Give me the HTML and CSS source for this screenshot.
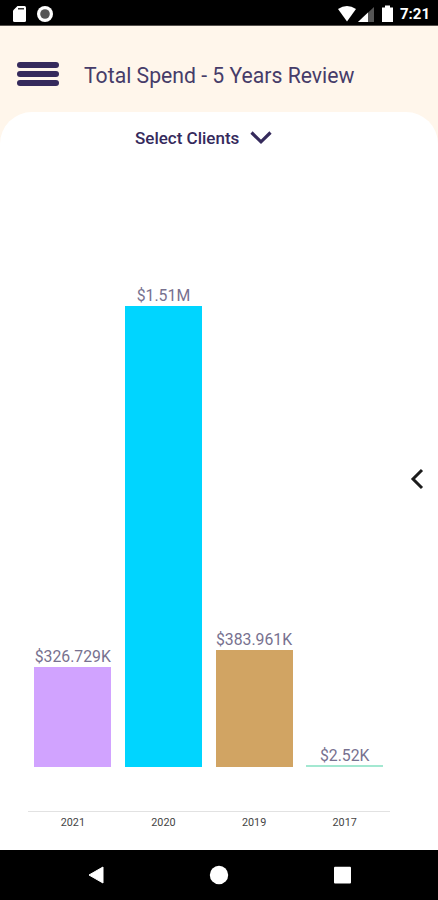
FILE: index.html
```
<!DOCTYPE html>
<html lang="en">
<head>
    <meta charset="utf-8">
    <title>Total Spend - 5 Years Review</title>
    <link rel="stylesheet" href="styles.css">
</head>
<body>
<div class="status-bar">
    <svg class="status-left" width="44" height="18" viewBox="0 0 44 18">
        <path d="M4.5 1H11.5Q13 1 13 2.5V15.5Q13 17 11.5 17H1.5Q0 17 0 15.5V5.5Z" fill="#fff"/>
        <path d="M5 3h6v1.500H5z" fill="#333"/>
        <circle cx="32" cy="9" r="8" fill="#fff"/>
        <circle cx="32" cy="9" r="4.800" fill="#555"/>
    </svg>
    <svg class="status-right" width="56" height="18" viewBox="0 0 56 18">
        <path d="M0 4Q9 -2 18 4L9 16.500Z" fill="#fff"/>
        <path d="M20 17L36 2V17Z" fill="#555"/>
        <path d="M20 17L30 7.500V17Z" fill="#fff"/>
        <path d="M47 0.500h5v2h3v14.500H44V2.500h3z" fill="#fff"/>
    </svg>
    <span class="clock">7:21</span>
</div>

<header class="header">
    <div class="menu">
        <span></span>
        <span></span>
        <span></span>
    </div>
    <h1>Total Spend - 5 Years Review</h1>
</header>

<main class="sheet">
    <div class="select">
        <span>Select Clients</span>
        <svg width="22" height="14" viewBox="0 0 22 14">
            <path d="M1.5 1.5L11 10.8L20.5 1.5" fill="none" stroke="#352a5c" stroke-width="3.200"/>
        </svg>
    </div>
    <div class="chart">
        <div class="column">
            <span class="value">$326.729K</span>
            <div class="bar purple" style="height: 100px"></div>
        </div>
        <div class="column">
            <span class="value">$1.51M</span>
            <div class="bar blue" style="height: 461px"></div>
        </div>
        <div class="column">
            <span class="value">$383.961K</span>
            <div class="bar brown" style="height: 117px"></div>
        </div>
        <div class="column">
            <span class="value low">$2.52K</span>
            <div class="bar green" style="height: 2px"></div>
        </div>
    </div>
    <div class="years">
        <span>2021</span>
        <span>2020</span>
        <span>2019</span>
        <span>2017</span>
    </div>
    <svg class="drawer-arrow" width="14" height="22" viewBox="0 0 14 22">
        <path d="M12 2L3 11L12 20" fill="none" stroke="#1c1c1c" stroke-width="3"/>
    </svg>
</main>

<nav class="nav-bar">
    <svg width="18" height="20" viewBox="0 0 18 20">
        <path d="M16 2L2 10L16 18Z" fill="#fff" stroke="#fff" stroke-linejoin="round"/>
    </svg>
    <svg width="20" height="20" viewBox="0 0 20 20">
        <circle cx="10" cy="10" r="9.200" fill="#fff"/>
    </svg>
    <svg width="18" height="20" viewBox="0 0 18 20">
        <rect x="1" y="1.800" width="17" height="16.700" rx="1" fill="#fff"/>
    </svg>
</nav>
</body>
</html>
```
FILE: styles.css
```
* {
    box-sizing: border-box;
}
body {
    margin: 0;
    height: 900px;
    display: flex;
    flex-direction: column;
    font-family: Roboto, 'Liberation Sans', sans-serif;
    background-color: #fff6eb;
    color: #352a5c;
    overflow: hidden;
}

/* Status bar */
.status-bar {
    height: 26px;
    flex: none;
    display: flex;
    align-items: center;
    padding: 2px 9px 0 13px;
    background-color: #000;
    border-bottom: 1px solid #55514d;
}
.status-right {
    margin-left: auto;
}
.clock {
    margin-left: 6px;
    width: 29px;
    font-size: 15px;
    font-weight: 700;
    color: #fff;
}

/* Header */
.header {
    height: 86px;
    flex: none;
    display: flex;
    align-items: center;
    padding: 10px 17px 0;
}
.menu {
    display: flex;
    flex-direction: column;
    gap: 3.500px;
    width: 42px;
    margin-right: 25px;
}
.menu span {
    height: 5.500px;
    border-radius: 3px;
    background-color: #352a5c;
}
h1 {
    margin: 2px 0 0;
    font-size: 21.200px;
    font-weight: 400;
    white-space: nowrap;
    color: #463c69;
}

/* Content */
.sheet {
    height: 738px;
    flex: none;
    position: relative;
    display: flex;
    flex-direction: column;
    background-color: #fff;
    border-radius: 32px 32px 0 0;
}
.select {
    display: flex;
    align-items: center;
    gap: 11px;
    height: 52px;
    padding-left: 135px;
    font-size: 17px;
    font-weight: 500;
}
.chart {
    height: 648px;
    width: 362.500px;
    margin-left: 27.500px;
    padding-bottom: 44px;
    display: grid;
    grid-template-columns: repeat(4, 1fr);
    align-items: end;
    border-bottom: 1px solid #e2e2e2;
}
.column {
    display: flex;
    flex-direction: column;
    align-items: center;
}
.value {
    font-size: 15.800px;
    line-height: 20px;
    color: #77718f;
}
.low {
    line-height: 18px;
}
.bar {
    width: 77px;
}
.purple {
    background-color: #d1a3ff;
}
.blue {
    background-color: #00d5ff;
}
.brown {
    background-color: #d1a463;
}
.green {
    background-color: #a3e8d1;
}
.years {
    display: grid;
    grid-template-columns: repeat(4, 1fr);
    width: 362.500px;
    margin-left: 27.500px;
    padding-top: 4px;
    font-size: 10.800px;
    line-height: 14px;
    text-align: center;
    color: #444;
}

/* Floats over the chart at the right edge */
.drawer-arrow {
    position: absolute;
    right: 14px;
    top: 356px;
}

/* Navigation bar */
.nav-bar {
    height: 50px;
    flex: none;
    display: flex;
    align-items: center;
    justify-content: space-between;
    padding: 0 87px;
    background-color: #000;
}
```
